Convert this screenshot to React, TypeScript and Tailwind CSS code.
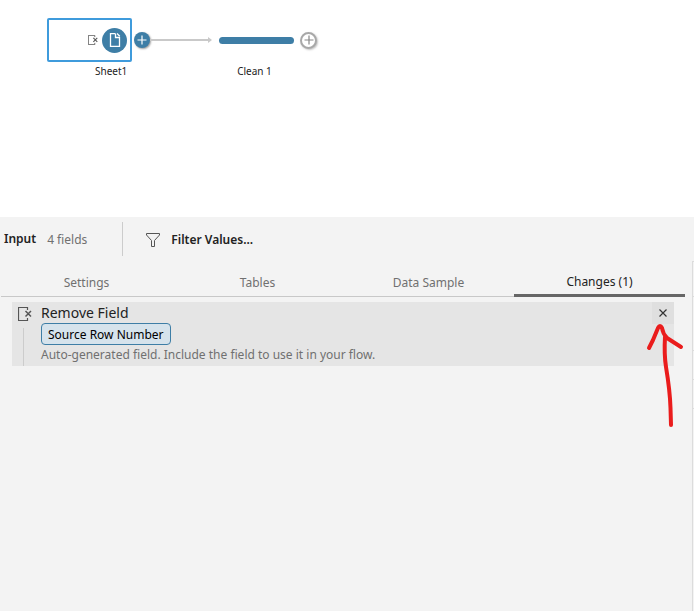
import React from "react";
import clsx from "clsx";

const RemoveFieldIcon: React.FC<{ className?: string }> = ({ className }) => (
  <svg viewBox="0 0 14 14" fill="none" stroke="#555555" className={className} aria-hidden="true">
    <path d="M9.5 3V0.5H0.5V13.5H9.5V11" strokeWidth="1.2" />
    <path d="M7.5 4L13 9.5M13 4L7.5 9.5" strokeWidth="1.5" />
  </svg>
);

const DocumentIcon = () => (
  <svg width="12" height="14" viewBox="0 0 12 14" fill="none" stroke="#ffffff" strokeWidth="1.3" aria-hidden="true">
    <path d="M6.5 0.7H1.5V13.3H10.5V4.5H6.5V0.700" />
    <path d="M8 0.500L10.800 3.200" />
  </svg>
);

const FunnelIcon = () => (
  <svg width="14" height="14" viewBox="0 0 14 14" fill="none" stroke="#555555" aria-hidden="true">
    <path d="M0.5 0.5H13.5V2L8.5 7.5V13.5H5.5V7.5L0.5 2Z" />
  </svg>
);

interface AddStepButtonProps {
  label: string;
  filled?: boolean;
}

const AddStepButton: React.FC<AddStepButtonProps> = ({ label, filled }) => (
  <button
    type="button"
    aria-label={label}
    className={clsx(
      "flex shrink-0 items-center justify-center rounded-full",
      filled
        ? "h-4 w-4 bg-[#3e7ea6] text-white shadow-[1px_1px_2px_rgba(0,0,0,0.4)]"
        : "h-[17px] w-[17px] border-2 border-[#a8a8a8] bg-white text-[#888888] shadow-[1px_1px_2px_rgba(0,0,0,0.25)]"
    )}
  >
    <svg width="10" height="10" viewBox="0 0 10 10" stroke="currentColor" className="shrink-0" aria-hidden="true">
      <path d="M5 0.5V9.5M0.5 5H9.5" strokeWidth="1.2" />
    </svg>
  </button>
);

const FlowCanvas = () => (
  <section className="flex h-[217px] items-start bg-white pl-[47px] pt-[18px] text-[10px] leading-[18px] text-[#222222]">
    <div className="w-[85px]">
      <div className="flex h-11 items-center justify-end gap-1 rounded-xs border-2 border-[#3f9bdc] pr-[3px]">
        <RemoveFieldIcon className="h-[10px] w-[10px]" />
        <span className="flex h-[25px] w-[25px] items-center justify-center rounded-full bg-[#3e7ea6]">
          <DocumentIcon />
        </span>
      </div>
      <p className="pl-12">Sheet1</p>
    </div>
    <div className="flex h-11 items-center pl-[2px]">
      <AddStepButton label="Add step after Sheet1" filled />
      <svg width="63" height="6" viewBox="0 0 63 6" aria-hidden="true">
        <path d="M0 3H59" stroke="#c9c9c9" strokeWidth="2" />
        <path d="M58 0L62 3L58 6Z" fill="#c9c9c9" />
      </svg>
    </div>
    <div className="ml-[6px] w-[75px]">
      <div className="flex h-11 items-center">
        <div className="h-[7px] w-full rounded-full bg-[#3e7ea6]" />
      </div>
      <p className="pr-1 text-center">Clean 1</p>
    </div>
    <div className="flex h-11 items-center pl-[6px]">
      <AddStepButton label="Add step after Clean 1" />
    </div>
  </section>
);

const tabs = ["Settings", "Tables", "Data Sample", "Changes (1)"];

const TabBar: React.FC<{ active: string }> = ({ active }) => (
  <div role="tablist" className="ml-px mr-[7px] flex border-b border-[#c8c8c8]">
    {tabs.map((tab) => (
      <button
        key={tab}
        type="button"
        role="tab"
        aria-selected={tab === active}
        className={clsx(
          "-mb-px h-[31px] flex-1 border-b-3 text-xs",
          tab === active
            ? "border-[#666666] pt-1 text-[#222222]"
            : "border-transparent pt-[6px] text-[#707070]"
        )}
      >
        {tab}
      </button>
    ))}
  </div>
);

const ChangeCard = () => (
  <article className="ml-3 mr-[18px] mt-[5px] flex h-16 bg-[#e5e5e5]">
    <div className="flex w-[29px] flex-col pl-[6px] pt-[5px]">
      <RemoveFieldIcon className="h-[14px] w-[14px]" />
      <div className="ml-[5px] mt-[7px] w-px flex-1 bg-[#cccccc]" />
    </div>
    <div className="min-w-0 flex-1">
      <h2 className="h-[21px] text-sm leading-[21px] text-[#222222]">Remove Field</h2>
      <span className="flex h-[22px] w-fit items-center rounded-sm border border-[#3e7ea6] bg-[#d6e3ec] px-[6px] pt-px text-xs text-black">
        Source Row Number
      </span>
      <p className="text-xs leading-5 text-[#707070]">
        Auto-generated field. Include the field to use it in your flow.
      </p>
    </div>
    <button
      type="button"
      aria-label="Remove change"
      className="flex h-[22px] w-[22px] items-center justify-center bg-[#dfdfdf]"
    >
      <svg width="8" height="8" viewBox="0 0 8 8" stroke="#333333" strokeWidth="1.2" aria-hidden="true">
        <path d="M0.5 0.5L7.5 7.5M7.5 0.5L0.5 7.5" />
      </svg>
    </button>
  </article>
);

const ArrowMark = () => (
  <svg
    width="38"
    height="106"
    viewBox="0 0 38 106"
    fill="none"
    stroke="#ea1c1c"
    strokeWidth="4"
    strokeLinecap="round"
    strokeLinejoin="round"
    className="pointer-events-none absolute right-2 top-[62px]"
    aria-hidden="true"
  >
    <path d="M3 25L7 17L12 5Q14 1 16 5Q17 11 21 15L35 24" />
    <path d="M19 14Q18 31 20 44Q24 68 24.5 85L25 102" />
  </svg>
);

const ProfileStrip = () => (
  <aside className="w-[2px] shrink-0 border-l border-t border-[#dcdcdc]">
    <div className="h-[35px] border-b border-[#dcdcdc]" />
    <div className="h-[54px] border-b border-[#dcdcdc]" />
    <div className="h-[29px] border-b border-[#dcdcdc]" />
    <div className="h-[29px] border-b border-[#dcdcdc]" />
  </aside>
);

const App = () => {
  return (
    <main className="flex min-h-screen flex-col bg-[#f3f3f3] font-['Noto_Sans',sans-serif]">
      <FlowCanvas />
      <header className="flex h-11 items-center pl-1 text-xs">
        <h1 className="font-semibold text-[#222222]">Input</h1>
        <span className="ml-[11px] pt-[2px] text-[#707070]">4 fields</span>
        <div className="ml-[35px] h-[34px] w-px bg-[#cccccc]" />
        <button type="button" className="ml-[23px] flex items-center gap-[11px] pt-[2px] font-semibold text-[#222222]">
          <FunnelIcon />
          Filter Values...
        </button>
      </header>
      <div className="flex flex-1">
        <div className="relative min-w-0 flex-1 pt-[5px]">
          <TabBar active="Changes (1)" />
          <ChangeCard />
          <ArrowMark />
        </div>
        <ProfileStrip />
      </div>
    </main>
  );
};

export default App;
